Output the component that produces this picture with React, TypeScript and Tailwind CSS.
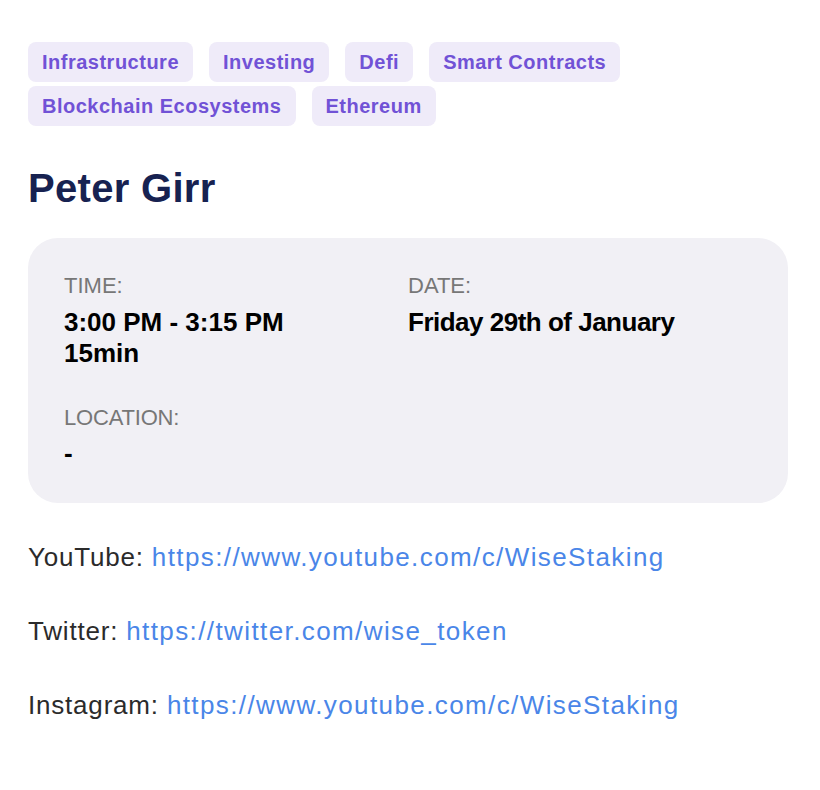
const tags = [
  "Infrastructure",
  "Investing",
  "Defi",
  "Smart Contracts",
  "Blockchain Ecosystems",
  "Ethereum",
];

const links = [
  { label: "YouTube", url: "https://www.youtube.com/c/WiseStaking" },
  { label: "Twitter", url: "https://twitter.com/wise_token" },
  { label: "Instagram", url: "https://www.youtube.com/c/WiseStaking" },
];

const App = () => {
  return (
    <div
      className="min-h-[790px] bg-white pt-[42px] pl-[28px] pr-[32px]"
      style={{ fontFamily: '"Liberation Sans", Arial, sans-serif' }}
    >
      {/* Tags */}
      <div className="flex flex-wrap gap-x-4 gap-y-1 max-w-[640px]">
        {tags.map((tag) => (
          <span
            key={tag}
            className="h-[40px] flex items-center px-[14px] rounded-lg bg-[#efebf9] text-[#7152d6] text-[20px] tracking-[0.5px] font-semibold"
          >
            {tag}
          </span>
        ))}
      </div>

      <h1 className="mt-[38px] text-[40px] leading-[48px] font-bold tracking-[0.3px] text-[#172251]">
        Peter Girr
      </h1>

      {/* Details card */}
      <div className="mt-[26px] w-[760px] h-[265px] rounded-[30px] bg-[#f1f0f5] px-[36px] pt-[35px]">
        <div className="grid grid-cols-2">
          <div>
            <div className="text-[22px] leading-[26px] text-[#777777]">TIME:</div>
            <div className="mt-[8px] text-[26px] leading-[31px] font-bold text-black">
              3:00 PM - 3:15 PM
              <br />
              15min
            </div>
          </div>
          <div>
            <div className="text-[22px] leading-[26px] text-[#777777]">DATE:</div>
            <div className="mt-[8px] text-[26px] leading-[31px] font-bold text-black tracking-[-0.5px]">
              Friday 29th of January
            </div>
          </div>
        </div>
        <div className="mt-[36px]">
          <div className="text-[22px] leading-[26px] text-[#777777] tracking-[-0.2px]">LOCATION:</div>
          <div className="mt-[7px] text-[26px] leading-[31px] font-bold text-black">-</div>
        </div>
      </div>

      {/* Social links */}
      <div className="mt-[39px] flex flex-col gap-[44px]">
        {links.map((l) => (
          <div key={l.label} className="text-[26px] leading-[30px] text-[#2b2b2b]">
            <span className="tracking-[0.8px]">{l.label}: </span>
            <a href={l.url} className="text-[#4a86e8] tracking-[1.4px]">
              {l.url}
            </a>
          </div>
        ))}
      </div>
    </div>
  );
};

export default App;
